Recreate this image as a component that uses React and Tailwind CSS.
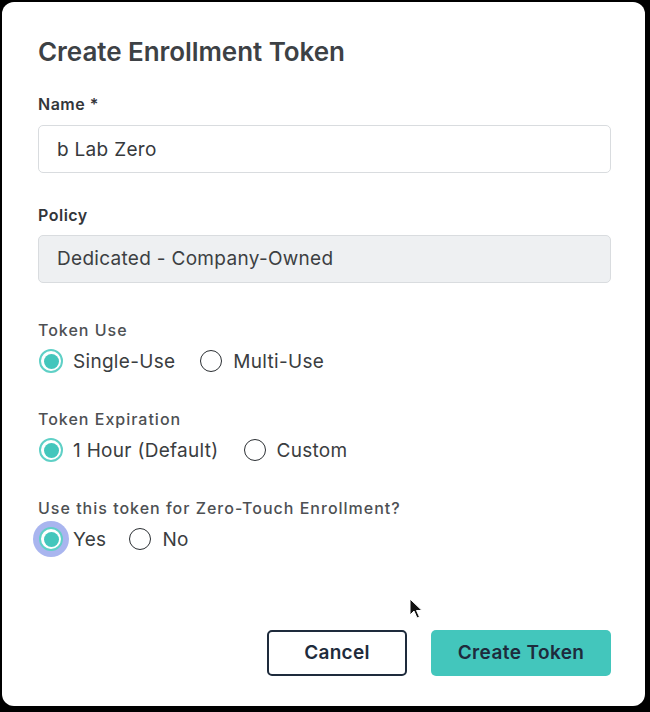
import React, { useState } from 'react'

function Radio({ checked, focused, label, onClick }) {
  return (
    <label className="flex items-center gap-[10px] cursor-pointer" onClick={onClick}>
      <span className="relative flex h-[24px] w-[24px] items-center justify-center">
        {focused && (
          <span className="absolute -inset-[6px] rounded-full bg-[#a9b5ef]" />
        )}
        {checked ? (
          <span className="relative flex h-[24px] w-[24px] items-center justify-center rounded-full border-2 border-[#5fd0c6] bg-white">
            <span className="h-[15px] w-[15px] rounded-full bg-[#43c6bc]" />
          </span>
        ) : (
          <span className="relative h-[22px] w-[22px] rounded-full border-[1.5px] border-[#2b2f33] bg-white" />
        )}
      </span>
      <span className="text-[19px] leading-none tracking-[0.3px] text-[#3a3d40]">{label}</span>
    </label>
  )
}

function RadioGroup({ title, options, value, onChange, focused, gap = 'gap-[24px]' }) {
  return (
    <div>
      <div className="text-[16px] font-medium leading-none tracking-[1px] text-[#4d5053]">{title}</div>
      <div className={`mt-[11px] flex items-center pl-[1px] ${gap}`}>
        {options.map((o) => (
          <Radio
            key={o}
            label={o}
            checked={value === o}
            focused={focused && value === o}
            onClick={() => onChange(o)}
          />
        ))}
      </div>
    </div>
  )
}

export default function App() {
  const [use, setUse] = useState('Single-Use')
  const [exp, setExp] = useState('1 Hour (Default)')
  const [zt, setZt] = useState('Yes')

  return (
    <div
      className="h-[712px] w-[650px] bg-black pb-[6px] pl-[2px] pr-[5px] pt-[2px]"
      style={{ fontFamily: 'Inter, "Liberation Sans", sans-serif' }}
    >
      <div className="relative flex h-full flex-col rounded-[12px] bg-white pl-[36px] pr-[34px]">
        <h2 className="mt-[34px] text-[26px] font-semibold leading-[32px] tracking-[-0.05px] text-[#3d4145]">
          Create Enrollment Token
        </h2>

        <label className="mt-[28px] text-[16px] font-semibold leading-none tracking-[0.5px] text-[#33363a]">Name *</label>
        <input
          defaultValue="b Lab Zero"
          className="mt-[13px] h-[48px] w-full rounded-[5px] border border-[#d9dcdf] bg-white px-[18px] text-[19px] tracking-[0.3px] text-[#36393c] outline-none"
        />

        <label className="mt-[34px] text-[16px] font-semibold leading-none tracking-[0.5px] text-[#33363a]">Policy</label>
        <div className="mt-[12px] flex h-[48px] w-full items-center rounded-[5px] border border-[#d9dcdf] bg-[#eef0f2] px-[18px] text-[19px] tracking-[0.3px] text-[#3c3f42]">
          Dedicated - Company-Owned
        </div>

        <div className="mt-[39px]">
          <RadioGroup
            title="Token Use"
            options={['Single-Use', 'Multi-Use']}
            value={use}
            onChange={setUse}
          />
        </div>
        <div className="mt-[38px]">
          <RadioGroup
            title="Token Expiration"
            options={['1 Hour (Default)', 'Custom']}
            value={exp}
            onChange={setExp}
          />
        </div>
        <div className="mt-[38px]">
          <RadioGroup
            title="Use this token for Zero-Touch Enrollment?"
            options={['Yes', 'No']}
            value={zt}
            onChange={setZt}
            focused
            gap="gap-[22px]"
          />
        </div>

        <div className="mt-auto mb-[30px] flex justify-end gap-[24px]">
          <button className="h-[46px] w-[140px] rounded-[5px] border-2 border-[#1e2b3c] bg-white text-[19px] font-semibold tracking-[0.3px] text-[#1e2b3c]">
            Cancel
          </button>
          <button className="h-[46px] w-[180px] rounded-[5px] bg-[#43c6bc] text-[19px] font-semibold tracking-[0.4px] text-[#1e2b3c]">
            Create Token
          </button>
        </div>

        <svg
          className="absolute left-[407px] top-[596px]"
          width="14"
          height="22"
          viewBox="0 0 14 22"
        >
          <path d="M1 1 L1 17 L5 13 L8 20 L10.5 19 L7.5 12.5 L13 12.5 Z" fill="#111" stroke="#fff" strokeWidth="1" />
        </svg>
      </div>
    </div>
  )
}
